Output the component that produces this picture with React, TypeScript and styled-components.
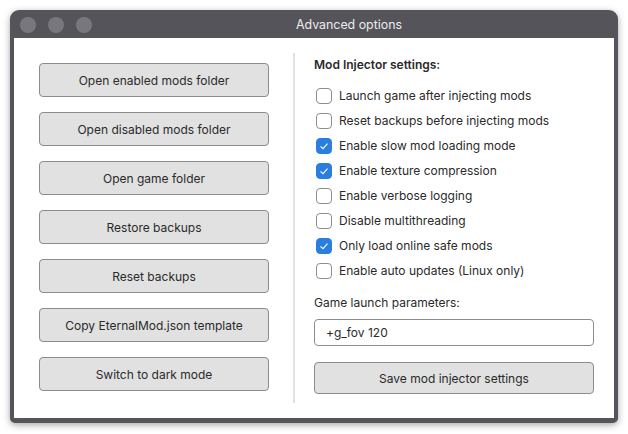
import React from "react";
import styled, { createGlobalStyle } from "styled-components";

const GlobalStyle = createGlobalStyle`
  html, body { margin: 0; padding: 0; background: #ffffff; }
  body { font-family: Inter, "Noto Sans", "Liberation Sans", sans-serif; }
  * { box-sizing: border-box; }
`;

const Page = styled.div`
  width: 628px;
  height: 434px;
  padding: 10px;
  background: #ffffff;
`;

const Window = styled.div`
  width: 608px;
  height: 413px;
  background: #55545a;
  border-radius: 9px 9px 5px 5px;
  box-shadow: 0 2px 7px rgba(0, 0, 0, 0.35);
  display: flex;
  flex-direction: column;
  padding: 0 4px 5px 4px;
`;

const TitleBar = styled.div`
  height: 28px;
  display: flex;
  align-items: center;
  padding-left: 6px;
  flex-shrink: 0;
`;

const Lights = styled.div`
  display: flex;
  gap: 12px;
  padding-top: 2px;
`;

const Light = styled.span`
  width: 16px;
  height: 16px;
  border-radius: 50%;
  background: #78777c;
`;

const Title = styled.div`
  flex: 1;
  text-align: center;
  color: #ececec;
  font-size: 12.4px;
  padding-right: 8px;
`;

const Content = styled.div`
  flex: 1;
  background: #ffffff;
  display: grid;
  grid-template-columns: 255px 24px 2px 299px;
  color: #2a2a2a;
  font-size: 12px;
`;

const LeftColumn = styled.div`
  display: flex;
  flex-direction: column;
  gap: 15px;
  padding: 25px 0 0 25px;
`;

const Button = styled.button<{ $w?: number; $h?: number }>`
  width: ${(p) => p.$w ?? 230}px;
  height: ${(p) => p.$h ?? 34}px;
  background: #e1e1e1;
  border: 1px solid #8c8c8c;
  border-radius: 4px;
  font-family: Inter, "Noto Sans", "Liberation Sans", sans-serif;
  font-size: 12px;
  color: #2a2a2a;
  padding: 0;
`;

const Divider = styled.div`
  grid-column: 3;
  margin: 15px 0;
  background: #e2e2e2;
`;

const RightColumn = styled.div`
  grid-column: 4;
  display: flex;
  flex-direction: column;
  padding: 15px 0 0 19px;
`;

const Heading = styled.div`
  font-weight: 600;
  line-height: 24px;
  margin-bottom: 6px;
`;

const Row = styled.label`
  height: 25px;
  display: flex;
  align-items: center;
  gap: 7px;
  padding-left: 2px;
`;

const Box = styled.span<{ $checked: boolean }>`
  width: 16px;
  height: 16px;
  border-radius: 4px;
  border: 1px solid ${(p) => (p.$checked ? "#2a7ee0" : "#8e8e8e")};
  background: ${(p) => (p.$checked ? "#2a7ee0" : "#ffffff")};
  display: flex;
  align-items: center;
  justify-content: center;
  flex-shrink: 0;
`;

const FieldLabel = styled.div`
  margin-top: 10px;
  line-height: 20px;
`;

const Input = styled.div`
  margin-top: 6px;
  width: 280px;
  height: 27px;
  border: 1px solid #8c8c8c;
  border-radius: 4px;
  display: flex;
  align-items: center;
  padding-left: 11px;
`;

const SaveWrap = styled.div`
  margin-top: 16px;
`;

const options: [string, boolean][] = [
  ["Launch game after injecting mods", false],
  ["Reset backups before injecting mods", false],
  ["Enable slow mod loading mode", true],
  ["Enable texture compression", true],
  ["Enable verbose logging", false],
  ["Disable multithreading", false],
  ["Only load online safe mods", true],
  ["Enable auto updates (Linux only)", false],
];

const buttons = [
  "Open enabled mods folder",
  "Open disabled mods folder",
  "Open game folder",
  "Restore backups",
  "Reset backups",
  "Copy EternalMod.json template",
  "Switch to dark mode",
];

const Check = () => (
  <svg width="12" height="12" viewBox="0 0 12 12">
    <polyline points="2.5,6.3 5,8.6 9.5,3.6" fill="none" stroke="#ffffff" strokeWidth="1.1" />
  </svg>
);

export default function App() {
  return (
    <>
      <GlobalStyle />
      <Page>
        <Window>
          <TitleBar>
            <Lights>
              <Light />
              <Light />
              <Light />
            </Lights>
            <Title>Advanced options</Title>
          </TitleBar>
          <Content>
            <LeftColumn>
              {buttons.map((b) => (
                <Button key={b}>{b}</Button>
              ))}
            </LeftColumn>
            <Divider />
            <RightColumn>
              <Heading>Mod Injector settings:</Heading>
              {options.map(([label, checked]) => (
                <Row key={label}>
                  <Box $checked={checked}>{checked && <Check />}</Box>
                  <span>{label}</span>
                </Row>
              ))}
              <FieldLabel>Game launch parameters:</FieldLabel>
              <Input>+g_fov 120</Input>
              <SaveWrap>
                <Button $w={280} $h={32}>Save mod injector settings</Button>
              </SaveWrap>
            </RightColumn>
          </Content>
        </Window>
      </Page>
    </>
  );
}
